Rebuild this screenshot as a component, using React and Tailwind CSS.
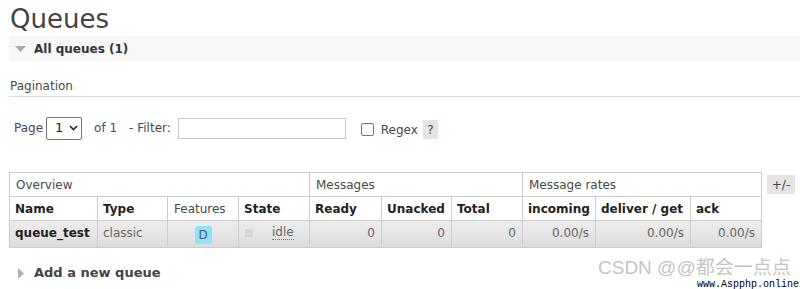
import React from 'react';

const cols = [88, 70, 71, 71, 72, 70, 71, 73, 95, 71];

const DownTri = () => (
  <svg width="11" height="6" viewBox="0 0 11 6" className="block">
    <path d="M0 0 L11 0 L5.5 6 Z" fill="#a8a8a8" />
  </svg>
);

const RightTri = () => (
  <svg width="6" height="11" viewBox="0 0 6 11" className="block">
    <path d="M0 0 L6 5.5 L0 11 Z" fill="#b0b0b0" />
  </svg>
);

const App = () => {
  const th = 'border border-[#cccccc] px-[6px] text-left font-normal whitespace-nowrap';
  const th2 = 'border border-[#cccccc] px-[5px] text-left font-bold text-[#222] whitespace-nowrap';
  const td = 'border border-[#cccccc] px-[6px] pb-[3px] text-right text-[#666] whitespace-nowrap';

  return (
    <div
      className="relative w-[800px] h-[289px] overflow-hidden bg-white text-[12px] text-[#484848]"
      style={{ fontFamily: '"DejaVu Sans", Verdana, sans-serif' }}
    >
      <div className="pl-[9px]">
        {/* 제목 */}
        <h1 className="pt-[4px] pl-px text-[26px] leading-[30px] text-[#444] mb-[2px]">Queues</h1>

        {/* 섹션 헤더 */}
        <div className="h-[25px] bg-[#f7f7f7] border-y border-[#f3f3f3] flex items-center">
          <div className="ml-[6px]"><DownTri /></div>
          <span className="ml-[8px] font-bold text-[#333]">All queues (1)</span>
        </div>

        {/* 페이지네이션 */}
        <div className="mt-[17px] pl-px leading-[16px] pb-[2px] border-b border-[#dddddd]">Pagination</div>

        <div className="mt-[19px] h-[24px] pl-[5px] flex items-center">
          <span>Page</span>
          <div className="ml-[3px] w-[36px] h-[23px] border border-[#767676] rounded-[2px] flex items-center pl-[8px] text-[#222] text-[13px]">
            <span>1</span>
            <svg width="9" height="6" viewBox="0 0 9 6" className="ml-[6px]">
              <path d="M1 1 L4.5 4.5 L8 1" fill="none" stroke="#222" strokeWidth="1.6" />
            </svg>
          </div>
          <span className="ml-[12px]">of 1</span>
          <span className="ml-[12px]">- Filter:</span>
          <div className="ml-[7px] w-[168px] h-[21px] border border-[#c8c8c8]" />
          <div className="ml-[15px] mt-[3px] w-[13px] h-[13px] border border-[#767676] rounded-[2px]" />
          <span className="ml-[7px] mt-[3px]">Regex</span>
          <span className="ml-[5px] mt-[3px] w-[15px] h-[19px] bg-[#e4e4e4] flex items-center justify-center">?</span>
        </div>

        {/* 큐 테이블 */}
        <div className="mt-[32px] flex items-start">
          <table className="table-fixed border-collapse w-[753px]">
            <colgroup>
              {cols.map((w, i) => (
                <col key={i} style={{ width: w }} />
              ))}
            </colgroup>
            <thead>
              <tr className="h-[24px]">
                <th colSpan={4} className={th}>Overview</th>
                <th colSpan={3} className={th}>Messages</th>
                <th colSpan={3} className={th}>Message rates</th>
              </tr>
              <tr className="h-[24px]">
                <th className={th2}>Name</th>
                <th className={th2}>Type</th>
                <th className={th}>Features</th>
                <th className={th2}>State</th>
                <th className={th2}>Ready</th>
                <th className={th2}>Unacked</th>
                <th className={th2}>Total</th>
                <th className={th2}>incoming</th>
                <th className={th2}>deliver / get</th>
                <th className={th2}>ack</th>
              </tr>
            </thead>
            <tbody>
              <tr className="h-[27px] bg-gradient-to-b from-[#ededed] to-[#dcdcdc]">
                <td className="border border-[#cccccc] px-[5px] pb-[3px] font-bold text-[#222] whitespace-nowrap">queue_test</td>
                <td className="border border-[#cccccc] px-[5px] pb-[3px] text-[#666]">classic</td>
                <td className="border border-[#cccccc] text-center">
                  <span className="inline-flex w-[17px] h-[18px] mt-[1px] rounded-[3px] bg-[#8ee3f8] text-[#556] items-center justify-center">D</span>
                </td>
                <td className="border border-[#cccccc] px-[6px] pb-[3px] text-[#666]">
                  <div className="flex items-center">
                    <span className="w-[8px] h-[8px] bg-[#d6d6d6]" />
                    <span className="ml-[19px] border-b border-dotted border-[#777] leading-[14px]">idle</span>
                  </div>
                </td>
                <td className={td}>0</td>
                <td className={td}>0</td>
                <td className={td}>0</td>
                <td className={td}>0.00/s</td>
                <td className={td}>0.00/s</td>
                <td className={td}>0.00/s</td>
              </tr>
            </tbody>
          </table>
          <span className="ml-[5px] mt-[3px] w-[28px] h-[19px] bg-[#e4e4e4] flex items-center justify-center text-[#444]">+/-</span>
        </div>

        {/* 새 큐 추가 */}
        <div className="mt-[18px] h-[14px] flex items-center">
          <div className="ml-[9px]"><RightTri /></div>
          <span className="ml-[10px] font-bold text-[13px] text-[#444]">Add a new queue</span>
        </div>
      </div>

      {/* 워터마크 */}
      <div
        className="absolute left-[598px] top-[255px] text-[19px] leading-[26px] text-[#c4c4c4] whitespace-nowrap"
        style={{ fontFamily: '"Liberation Sans", "Noto Sans CJK SC", sans-serif' }}
      >
        CSDN @@都会一点点
      </div>
      <div
        className="absolute left-[697px] top-[279px] text-[10px] leading-[12px] text-black whitespace-nowrap"
        style={{ fontFamily: '"Liberation Mono", "Noto Sans CJK SC", monospace' }}
      >
        www.Aspphp.online
      </div>
    </div>
  );
};

export default App;
